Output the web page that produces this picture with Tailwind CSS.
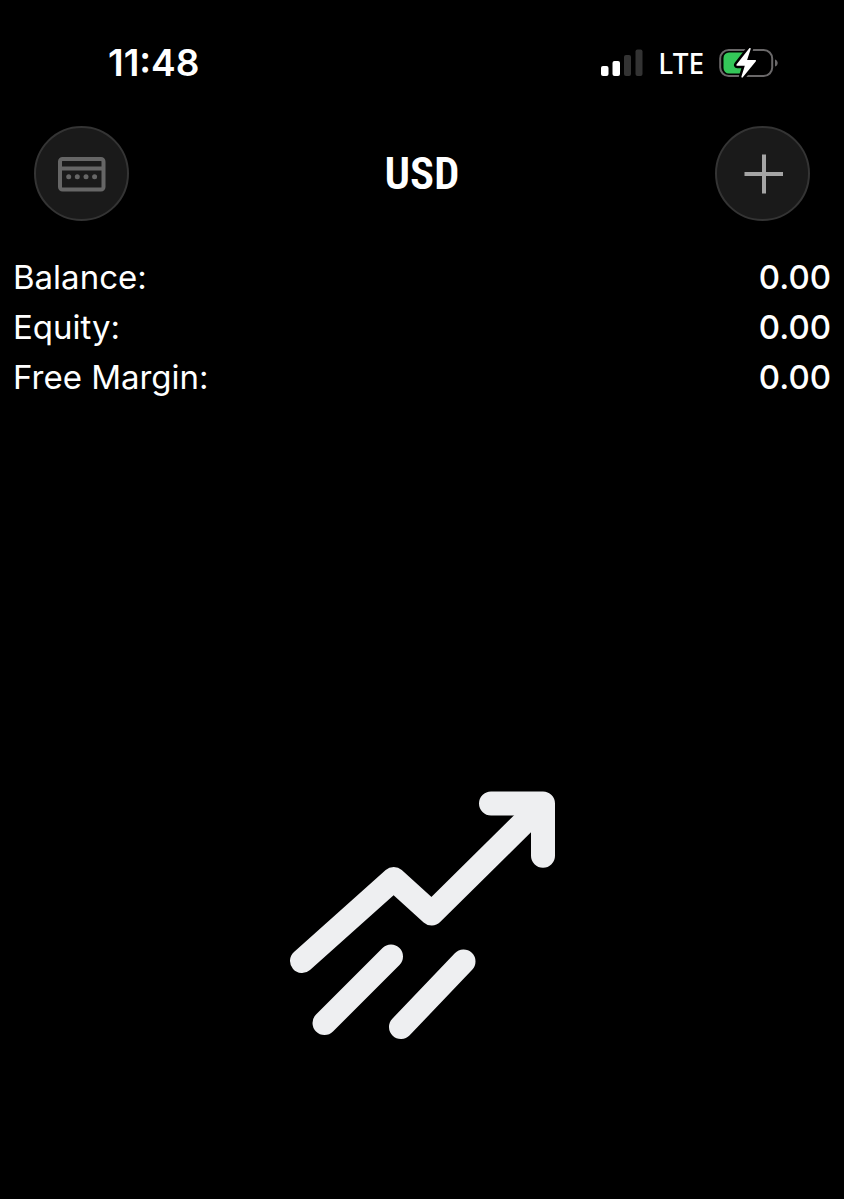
<!DOCTYPE html>
<html lang="en">
<head>
  <meta charset="UTF-8">
  <meta name="viewport" content="width=device-width, initial-scale=1">
  <title>Trade</title>
  <script src="https://cdn.jsdelivr.net/npm/@tailwindcss/browser@4"></script>
</head>
<body class="bg-black text-white font-['Inter',sans-serif] min-h-screen flex flex-col">

  <!-- Status bar -->
  <div class="h-[126px] pl-[108px] pr-[66px] flex items-center justify-between">
    <div class="text-[37px] leading-[40px] font-semibold">11:48</div>
    <div class="flex items-center gap-[15px]">
      <svg class="w-[42px] h-7" viewBox="0 0 42 28" aria-label="Signal">
        <rect x="0" y="17" width="7.5" height="10" rx="2" fill="#fff"/>
        <rect x="11.5" y="12" width="7.5" height="15" rx="2" fill="#fff"/>
        <rect x="23" y="6" width="7" height="21" rx="2" fill="#333"/>
        <rect x="34.5" y="0.5" width="7" height="26.5" rx="2" fill="#333"/>
      </svg>
      <span class="text-[28px] leading-[40px] font-['Noto_Sans',sans-serif] font-medium">LTE</span>
      <svg class="w-[59px] h-8" viewBox="0 0 59 32" aria-label="Battery charging">
        <rect x="1.2" y="3" width="52" height="26" rx="8.5" fill="none" stroke="#6a6869" stroke-width="2"/>
        <path d="M56 12.5c3.600 1 3.600 6 0 7z" fill="#6a6869"/>
        <path d="M10 5.500h15v21H10A5.500 5.500 0 0 1 4.500 21V11A5.500 5.500 0 0 1 10 5.500z" fill="#34c759"/>
        <path d="M31.600 2.200c.4-1.200-.7-1.700-1.500-.8L17.700 17.200c-.6.800-.3 1.500.6 1.500h7.500l-3.300 10.600c-.4 1.300.7 1.800 1.500.8l12.700-15.700c.6-.8.300-1.500-.6-1.500h-8z" fill="#fff" stroke="#000" stroke-width="5" stroke-linejoin="round" paint-order="stroke"/>
      </svg>
    </div>
  </div>

  <!-- Header -->
  <header class="px-[34px] flex items-center justify-between">
    <button type="button" aria-label="Accounts" class="size-[95px] rounded-full bg-[#1a1a1a] border-2 border-[#343434] flex items-center justify-center">
      <svg class="w-12 h-9" viewBox="0 0 48 36" fill="none">
        <rect x="2" y="3" width="43.500" height="30.500" rx="2.500" stroke="#666" stroke-width="4"/>
        <path d="M2 12.500h43.500" stroke="#666" stroke-width="4"/>
        <g fill="#666">
          <circle cx="10.700" cy="20.800" r="2.500"/>
          <circle cx="19.300" cy="20.800" r="2.500"/>
          <circle cx="28" cy="20.800" r="2.500"/>
          <circle cx="36.600" cy="20.800" r="2.500"/>
        </g>
      </svg>
    </button>
    <h1 class="text-[45px] leading-[48px] font-semibold font-['Roboto_Condensed','Liberation_Sans_Narrow',sans-serif]">USD</h1>
    <button type="button" aria-label="Add" class="size-[95px] rounded-full bg-[#1a1a1a] border-2 border-[#343434] flex items-center justify-center">
      <svg class="size-10" viewBox="0 0 40 40">
        <path d="M21 .5v39M1.500 20h38.500" stroke="#a5a5a5" stroke-width="4"/>
      </svg>
    </button>
  </header>

  <!-- Account summary -->
  <dl class="mt-[31px] px-[13px] text-[33px] leading-[50px]">
    <div class="flex justify-between">
      <dt>Balance:</dt>
      <dd class="font-medium">0.00</dd>
    </div>
    <div class="flex justify-between">
      <dt>Equity:</dt>
      <dd class="font-medium">0.00</dd>
    </div>
    <div class="flex justify-between">
      <dt>Free Margin:</dt>
      <dd class="font-medium">0.00</dd>
    </div>
  </dl>

  <!-- Empty state -->
  <main class="flex-1 flex items-end justify-center pb-40">
    <svg class="w-[266px] h-[248px]" viewBox="0 0 266 248" fill="none" stroke="#eeeff1" stroke-width="24" stroke-linecap="round" stroke-linejoin="round">
      <path d="M13 170L104.700 88l38 34.500L252 14.500"/>
      <path d="M202 12.500h52v52.300"/>
      <path d="M102 165.500L35.500 232"/>
      <path d="M174.500 170.500L112 236"/>
    </svg>
  </main>

</body>
</html>
